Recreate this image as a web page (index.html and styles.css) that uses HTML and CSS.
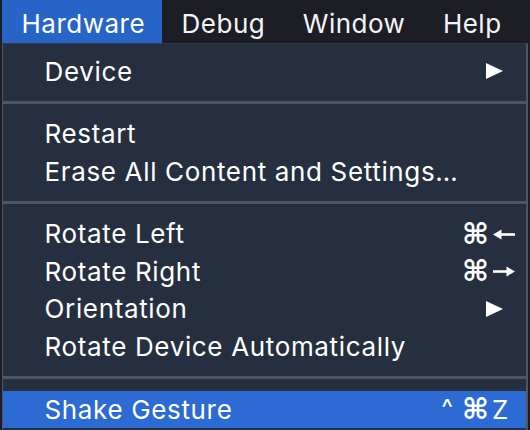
FILE: index.html
```html
<!DOCTYPE html>
<html>
<head>
<meta charset="utf-8">
<link rel="stylesheet" href="styles.css">
</head>
<body>
<div class="screen">
  <nav class="menubar">
    <span class="mb-item active">Hardware</span>
    <span class="mb-item">Debug</span>
    <span class="mb-item">Window</span>
    <span class="mb-item">Help</span>
  </nav>
  <div class="menu">
    <div class="item">
      <span class="label">Device</span><span class="mods"></span>
      <span class="key"><svg class="tri" width="17" height="16" viewBox="0 0 17 16"><path d="M0 0 L17 8 L0 16 Z" fill="#fff"/></svg></span>
    </div>
    <div class="sep"></div>
    <div class="item"><span class="label">Restart</span><span class="mods"></span><span class="key"></span></div>
    <div class="item"><span class="label">Erase All Content and Settings…</span><span class="mods"></span><span class="key"></span></div>
    <div class="sep"></div>
    <div class="item">
      <span class="label">Rotate Left</span><span class="mods"><span class="cmd">⌘</span></span>
      <span class="key"><svg class="arrow" width="22" height="11" viewBox="0 0 22 11"><path d="M3 5.5 H22" stroke="#fff" stroke-width="2.6"/><path d="M0 5.5 L8.5 0.5 L8.5 10.5 Z" fill="#fff"/></svg></span>
    </div>
    <div class="item">
      <span class="label">Rotate Right</span><span class="mods"><span class="cmd">⌘</span></span>
      <span class="key"><svg class="arrow" width="22" height="11" viewBox="0 0 22 11"><path d="M0 5.5 H19" stroke="#fff" stroke-width="2.6"/><path d="M22 5.5 L13.5 0.5 L13.5 10.5 Z" fill="#fff"/></svg></span>
    </div>
    <div class="item">
      <span class="label">Orientation</span><span class="mods"></span>
      <span class="key"><svg class="tri" width="17" height="16" viewBox="0 0 17 16"><path d="M0 0 L17 8 L0 16 Z" fill="#fff"/></svg></span>
    </div>
    <div class="item"><span class="label">Rotate Device Automatically</span><span class="mods"></span><span class="key"></span></div>
    <div class="sep"></div>
    <div class="item selected">
      <span class="label">Shake Gesture</span><span class="mods"><span class="caret">^</span><span class="cmd">⌘</span></span>
      <span class="key"><span class="letter">Z</span></span>
    </div>
  </div>
</div>
</body>
</html>
```

FILE: styles.css
```css
* { box-sizing: border-box; }
html, body { margin: 0; padding: 0; }
body {
  width: 530px;
  height: 430px;
  overflow: hidden;
  background: #1c1d25;
  font-family: Inter, "Noto Sans", sans-serif;
  color: #ffffff;
  font-size: 26px;
  letter-spacing: 0.65px;
}
.screen {
  display: flex;
  flex-direction: column;
  height: 430px;
}
.menubar {
  display: flex;
  height: 43px;
  padding-left: 2px;
  background: #1c1d25;
  flex-shrink: 0;
  letter-spacing: 0.5px;
}
.mb-item {
  padding: 5px 18px 0 19.5px;
  line-height: 38px;
  color: #f4f5f7;
}
.mb-item.active {
  background: #2764c8;
  color: #ffffff;
  padding-right: 17px;
}
.menu {
  flex: 1;
  margin: 0 2px;
  background: #262f3f;
  border-left: 1px solid #4e5565;
  border-right: 2px solid #4e5565;
  border-top: 1px solid #333a48;
  padding-top: 8.5px;
}
.item {
  display: grid;
  grid-template-columns: 1fr auto 28px;
  column-gap: 0;
  align-items: center;
  height: 37.6px;
  padding-left: 41.5px;
  padding-right: 9px;
  line-height: 37.6px;
}
.item.selected {
  background: #2b6bd3;
  height: 37px;
}
.mods {
  display: flex;
  align-items: center;
  justify-content: flex-end;
  letter-spacing: 0;
}
.cmd {
  font-family: "DejaVu Sans", sans-serif;
  font-weight: bold;
  font-size: 29px;
  line-height: 1;
}
.caret {
  font-size: 25px;
  margin-right: 9px;
  position: relative;
  top: -1px;
}
.key {
  display: flex;
  align-items: center;
}
.tri { margin-left: -3px; }
.arrow { margin-left: 4px; }
.letter { margin-left: 3px; }
.sep {
  height: 25px;
  padding: 10.5px 0 11.5px;
}
.sep::before {
  content: "";
  display: block;
  height: 3px;
  background: #4b5566;
}
```
